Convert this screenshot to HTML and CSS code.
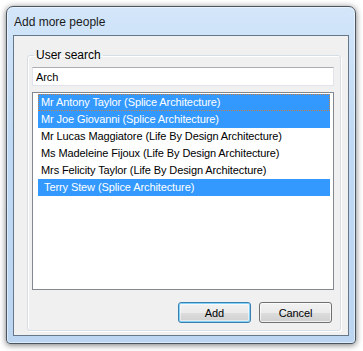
FILE: index.html
```html
<!DOCTYPE html>
<html lang="en">
<head>
    <meta charset="UTF-8">
    <title>Add more people</title>
    <link rel="stylesheet" href="styles.css">
</head>
<body>
    <div class="window">
        <div class="title">Add more people</div>
        <div class="client">
            <fieldset class="group">
                <legend>User search</legend>
                <input type="text" class="search" value="Arch">
                <ul class="list">
                    <li class="selected focused">Mr Antony Taylor (Splice Architecture)</li>
                    <li class="selected">Mr Joe Giovanni (Splice Architecture)</li>
                    <li>Mr Lucas Maggiatore (Life By Design Architecture)</li>
                    <li>Ms Madeleine Fijoux (Life By Design Architecture)</li>
                    <li>Mrs Felicity Taylor (Life By Design Architecture)</li>
                    <li class="selected indent">Terry Stew (Splice Architecture)</li>
                </ul>
                <div class="buttons">
                    <button class="btn default">Add</button>
                    <button class="btn">Cancel</button>
                </div>
            </fieldset>
        </div>
    </div>
</body>
</html>
```

FILE: styles.css
```css
html, body {
    margin: 0;
    padding: 0;
    background: #ffffff;
}
body {
    font-family: 'Liberation Sans', Arial, sans-serif;
    font-size: 12px;
    color: #000;
    width: 363px;
    height: 351px;
    overflow: hidden;
}
.window {
    margin: 6px 0 0 6px;
    width: 350px;
    height: 338px;
    box-sizing: border-box;
    border: 1px solid #4a5563;
    border-radius: 7px 7px 4px 4px;
    background: linear-gradient(#d3e6fa, #c0d9f4 40%, #bcd5f1);
    box-shadow: 0 1px 6px rgba(0, 0, 0, 0.55), inset 0 0 0 1px rgba(255, 255, 255, 0.5);
    display: flex;
    flex-direction: column;
}
.title {
    height: 28px;
    padding-left: 7px;
    line-height: 30px;
    font-size: 12px;
    color: #1b1b1b;
}
.client {
    flex: 1;
    margin: 0 6px 7px 6px;
    border: 1px solid #66778a;
    background: #f0f0f0;
    padding: 11px 7px 4px 13px;
    display: flex;
}
.group {
    flex: 1;
    margin: 0;
    padding: 2px 6px 6px 4px;
    border: 1px solid #d5dfe5;
    border-radius: 3px;
    box-shadow: inset 1px 1px 0 #fff, 1px 1px 0 #fff;
    display: flex;
    flex-direction: column;
    min-width: 0;
}
.group legend {
    margin-left: 2px;
    padding: 0 2px;
    line-height: 16px;
    color: #000;
}
.search {
    display: block;
    width: 100%;
    height: 19px;
    box-sizing: border-box;
    margin: 2px 0 0 0;
    padding: 0 3px;
    border: 1px solid #e2e3ea;
    border-top-color: #abadb3;
    background: #fff;
    font-family: inherit;
    font-size: 11px;
    letter-spacing: -0.1px;
    outline: none;
}
.list {
    list-style: none;
    margin: 6px 0 0 0;
    padding: 1px 3px 0 5px;
    height: 198px;
    box-sizing: border-box;
    border: 1px solid #828790;
    background: #fff;
    font-size: 11px;
    letter-spacing: -0.1px;
}
.list li {
    height: 17px;
    line-height: 17px;
    padding-left: 3px;
    white-space: nowrap;
}
.list li.selected {
    background: #3399ff;
    color: #fff;
}
.list li.focused {
    outline: 1px dotted #c8804a;
    outline-offset: -1px;
}
.list li.indent {
    padding-left: 6px;
}
.buttons {
    display: flex;
    justify-content: flex-end;
    gap: 8px;
    margin-top: 12px;
    padding-right: 2px;
}
.btn {
    width: 73px;
    height: 21px;
    box-sizing: border-box;
    padding: 0;
    border: 1px solid #707070;
    border-radius: 3px;
    background: linear-gradient(#f2f2f2, #ebebeb 50%, #dddddd 51%, #cfcfcf);
    box-shadow: inset 0 0 0 1px rgba(255, 255, 255, 0.7);
    font-family: inherit;
    font-size: 11px;
    letter-spacing: -0.1px;
    color: #000;
}
.btn.default {
    border-color: #3c7fb1;
    box-shadow: inset 0 0 0 1px #7fd1f5, inset 0 0 0 2px rgba(255, 255, 255, 0.5);
}
```
